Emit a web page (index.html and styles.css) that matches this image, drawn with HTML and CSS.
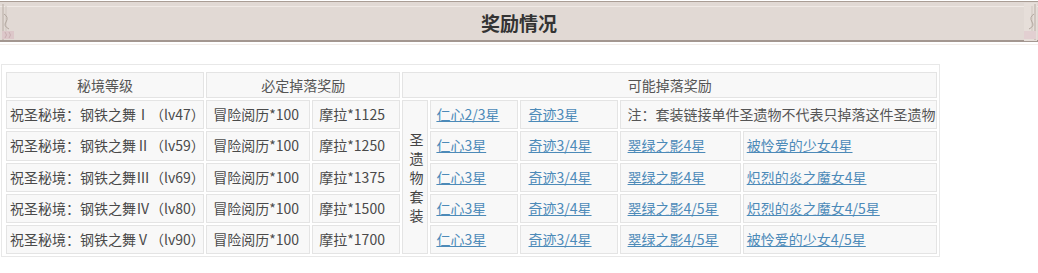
FILE: index.html
```html
<!DOCTYPE html>
<html lang="zh">
<head>
<meta charset="utf-8">
<title>奖励情况</title>
<link rel="stylesheet" href="styles.css">
</head>
<body>
<div class="titlebar">
  <svg class="orn orn-left" width="16" height="44" viewBox="0 0 16 44">
    <path d="M3 4 V40" stroke="#b7aca4" stroke-width="1" fill="none"/>
    <path d="M6 6 V38" stroke="#cfc6bf" stroke-width="1" fill="none"/>
    <path d="M4 14 q5 3 2 8 q-3 4 3 7" stroke="#b2a79f" stroke-width="1" fill="none"/>
    <rect x="2" y="31" width="12" height="8" fill="#dcc7c9"/>
    <path d="M5 32 q3 3 0 6 M9 32 q3 3 0 6" stroke="#c9aeb1" stroke-width="1" fill="none"/>
  </svg>
  <h2 class="title">奖励情况</h2>
  <svg class="orn orn-right" width="16" height="44" viewBox="0 0 16 44">
    <rect x="2" y="3" width="13" height="38" fill="#e6ded9"/>
    <path d="M13 4 V40" stroke="#b7aca4" stroke-width="1" fill="none"/>
    <path d="M10 6 V38" stroke="#cfc6bf" stroke-width="1" fill="none"/>
    <path d="M12 14 q-5 3 -2 8 q3 4 -3 7" stroke="#b2a79f" stroke-width="1" fill="none"/>
    <rect x="2" y="31" width="12" height="8" fill="#e2cfd1"/>
  </svg>
</div>

<table class="reward">
  <colgroup>
    <col class="c1"><col class="c2"><col class="c3"><col class="c4">
    <col class="c5"><col class="c6"><col class="c7"><col class="c8">
  </colgroup>
  <thead>
    <tr>
      <th>秘境等级</th>
      <th colspan="2">必定掉落奖励</th>
      <th colspan="5">可能掉落奖励</th>
    </tr>
  </thead>
  <tbody>
    <tr>
      <td class="lvl">祝圣秘境：钢铁之舞Ⅰ（lv47）</td>
      <td class="p6">冒险阅历*100</td>
      <td class="p6">摩拉*1125</td>
      <td class="vert" rowspan="5">圣遗物套装</td>
      <td class="p5"><a href="#">仁心2/3星</a></td>
      <td class="p7"><a href="#">奇迹3星</a></td>
      <td class="p7 note" colspan="2">注：套装链接单件圣遗物不代表只掉落这件圣遗物</td>
    </tr>
    <tr>
      <td class="lvl">祝圣秘境：钢铁之舞Ⅱ（lv59）</td>
      <td class="p6">冒险阅历*100</td>
      <td class="p6">摩拉*1250</td>
      <td class="p5"><a href="#">仁心3星</a></td>
      <td class="p7"><a href="#">奇迹3/4星</a></td>
      <td class="p7"><a href="#">翠绿之影4星</a></td>
      <td class="p3"><a href="#">被怜爱的少女4星</a></td>
    </tr>
    <tr>
      <td class="lvl">祝圣秘境：钢铁之舞Ⅲ（lv69）</td>
      <td class="p6">冒险阅历*100</td>
      <td class="p6">摩拉*1375</td>
      <td class="p5"><a href="#">仁心3星</a></td>
      <td class="p7"><a href="#">奇迹3/4星</a></td>
      <td class="p7"><a href="#">翠绿之影4星</a></td>
      <td class="p3"><a href="#">炽烈的炎之魔女4星</a></td>
    </tr>
    <tr>
      <td class="lvl">祝圣秘境：钢铁之舞Ⅳ（lv80）</td>
      <td class="p6">冒险阅历*100</td>
      <td class="p6">摩拉*1500</td>
      <td class="p5"><a href="#">仁心3星</a></td>
      <td class="p7"><a href="#">奇迹3/4星</a></td>
      <td class="p7"><a href="#">翠绿之影4/5星</a></td>
      <td class="p3"><a href="#">炽烈的炎之魔女4/5星</a></td>
    </tr>
    <tr>
      <td class="lvl">祝圣秘境：钢铁之舞Ⅴ（lv90）</td>
      <td class="p6">冒险阅历*100</td>
      <td class="p6">摩拉*1700</td>
      <td class="p5"><a href="#">仁心3星</a></td>
      <td class="p7"><a href="#">奇迹3/4星</a></td>
      <td class="p7"><a href="#">翠绿之影4/5星</a></td>
      <td class="p3"><a href="#">被怜爱的少女4/5星</a></td>
    </tr>
  </tbody>
</table>
</body>
</html>
```
FILE: styles.css
```css
html, body {
  margin: 0;
  padding: 0;
  background: #ffffff;
}
body {
  font-family: "Noto Sans CJK SC", "Noto Sans", sans-serif;
  font-size: 14px;
  color: #4a4a4a;
}

.titlebar {
  position: relative;
  margin-top: 1px;
  height: 38px;
  background: #e1d9d4;
  border-top: 1px solid #a99d95;
  border-bottom: 2px solid #a39790;
  box-shadow: inset 0 4px 0 #e1d9d4, inset 0 5px 0 #efe9e5, 0 2px 0 #ffffff, 0 3px 0 #f3eeea;
  display: flex;
  align-items: center;
  justify-content: center;
}
.title {
  margin: 0;
  font-size: 19px;
  font-weight: bold;
  color: #333;
  line-height: 24px;
  padding-top: 4px;
}
.orn {
  position: absolute;
  top: -2px;
}
.orn-left { left: 0; }
.orn-right { right: 0; }

.reward {
  margin: 22px 0 0 1px;
  border-collapse: separate;
  border-spacing: 2px;
  border: 1px solid #e8e8e8;
  padding: 5px 0 0 2px;
  table-layout: fixed;
  width: 939px;
}
.c1 { width: 198px; }
.c2 { width: 104px; }
.c3 { width: 88px; }
.c4 { width: 26px; }
.c5 { width: 88px; }
.c6 { width: 97px; }
.c7 { width: 121px; }
.c8 { width: 194px; }

.reward th,
.reward td {
  border: 1px solid #e4e4e4;
  background: #f8f8f8;
  white-space: nowrap;
  overflow: hidden;
}
.reward th {
  font-weight: normal;
  color: #555;
  line-height: 20px;
  padding: 2px 0;
  text-align: center;
}
.reward td {
  line-height: 19.25px;
  padding: 4px 0;
  text-align: left;
}
.reward td.lvl { padding-left: 3px; }
.reward td.p6 { padding-left: 6px; }
.reward td.p5 { padding-left: 5px; }
.reward td.p7 { padding-left: 7px; }
.reward td.p3 { padding-left: 3px; }
.reward td.note { color: #555; }
.reward td.vert {
  white-space: normal;
  word-break: break-all;
  text-align: center;
  padding: 0 6px;
  line-height: 19px;
  color: #444;
}
.reward a {
  color: #4c8ab8;
  text-decoration: underline;
}
```
